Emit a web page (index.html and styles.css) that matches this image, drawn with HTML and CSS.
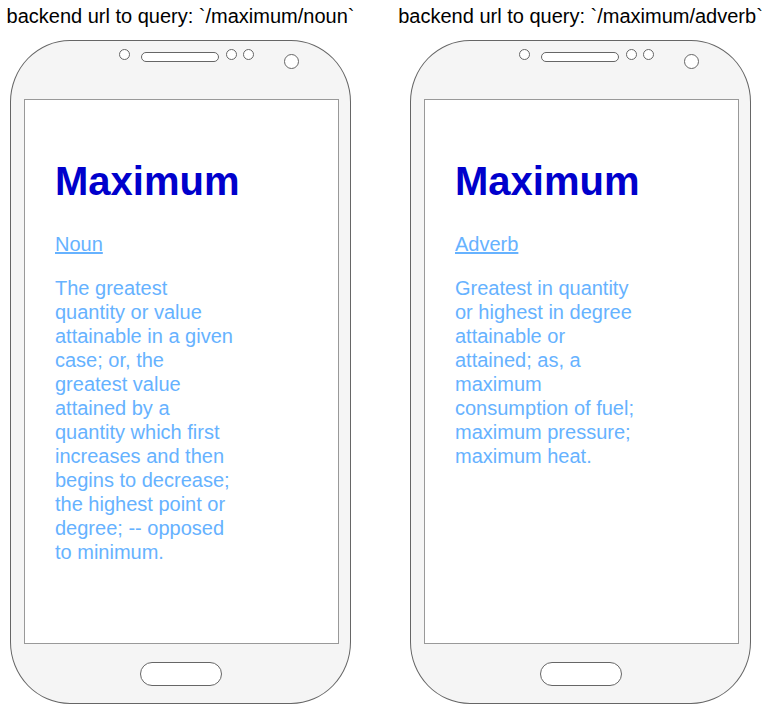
FILE: index.html
```html
<!DOCTYPE html>
<html lang="en">
<head>
    <meta charset="UTF-8">
    <title>Maximum</title>
    <link rel="stylesheet" href="styles.css">
</head>
<body>
    <div class="columns">
        <div class="column">
            <div class="caption"><span>backend url to query: `/maximum/noun`</span></div>
            <div class="phone">
                <svg class="sensors" width="338" height="58" viewBox="0 0 338 58">
                    <circle cx="113.5" cy="13.5" r="5" />
                    <rect x="130.5" y="11.5" width="77" height="9" rx="4.5" />
                    <circle cx="220.5" cy="13.5" r="5" />
                    <circle cx="237.5" cy="13.5" r="5" />
                    <circle cx="280.5" cy="20.5" r="7" />
                </svg>
                <div class="screen">
                    <h1 class="word">Maximum</h1>
                    <a class="kind" href="#">Noun</a>
                    <p class="meaning">The greatest quantity or value attainable in a given case; or, the greatest value attained by a quantity which first increases and then begins to decrease; the highest point or degree; -- opposed to minimum.</p>
                </div>
                <div class="home"></div>
            </div>
        </div>
        <div class="column">
            <div class="caption"><span>backend url to query: `/maximum/adverb`</span></div>
            <div class="phone">
                <svg class="sensors" width="338" height="58" viewBox="0 0 338 58">
                    <circle cx="113.5" cy="13.5" r="5" />
                    <rect x="130.5" y="11.5" width="77" height="9" rx="4.5" />
                    <circle cx="220.5" cy="13.5" r="5" />
                    <circle cx="237.5" cy="13.5" r="5" />
                    <circle cx="280.5" cy="20.5" r="7" />
                </svg>
                <div class="screen">
                    <h1 class="word">Maximum</h1>
                    <a class="kind" href="#">Adverb</a>
                    <p class="meaning">Greatest in quantity or highest in degree attainable or attained; as, a maximum consumption of fuel; maximum pressure; maximum heat.</p>
                </div>
                <div class="home"></div>
            </div>
        </div>
    </div>
</body>
</html>
```

FILE: styles.css
```css
body {
    margin: 0;
    font-family: "Liberation Sans", Arial, sans-serif;
    background-color: white;
    color: black;
}
.columns {
    display: flex;
}
.column {
    width: 400px;
    flex-shrink: 0;
}
.caption {
    display: flex;
    justify-content: center; /* centred over the phone, may overflow both sides */
    margin-left: 10px;
    width: 341px;
    height: 40px;
    box-sizing: border-box;
    padding-top: 4px;
    line-height: 24px;
    font-size: 20px;
    white-space: nowrap;
}
.caption span {
    flex-shrink: 0;
}
.phone {
    margin-left: 10px;
    width: 341px;
    height: 664px;
    box-sizing: border-box;
    border: 1px solid #666;
    border-radius: 60px / 62px;
    background-color: #f5f5f5;
    display: flex;
    flex-direction: column;
}
.sensors {
    display: block;
    fill: white;
    stroke: #666;
    stroke-width: 1;
}
.screen {
    margin-left: 13px;
    width: 315px;
    height: 545px;
    box-sizing: border-box;
    border: 1px solid #999;
    background-color: white;
    padding: 57px 30px 0 30px;
}
.word {
    margin: 0;
    font-size: 40px;
    line-height: 48px;
    font-weight: bold;
    color: #0000cc;
}
.kind {
    display: inline-block;
    margin-top: 27px;
    font-size: 20px;
    line-height: 24px;
    color: #66b2ff;
    text-decoration: underline;
}
.meaning {
    margin: 20px 0 0 0;
    width: 180px;
    font-size: 20px;
    line-height: 24px;
    color: #66b2ff;
}
.home {
    margin: 18px auto 0 auto;
    width: 82px;
    height: 24px;
    box-sizing: border-box;
    border: 1px solid #666;
    border-radius: 12px;
    background-color: white;
}
```
